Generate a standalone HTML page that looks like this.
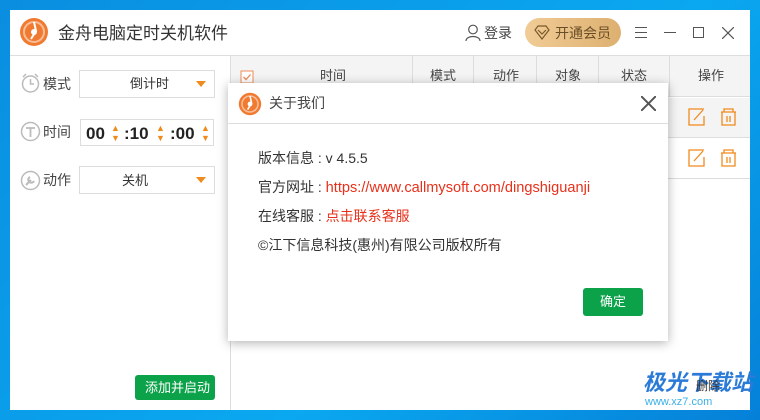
<!DOCTYPE html><html><head><meta charset="utf-8"><style>
*{margin:0;padding:0;box-sizing:border-box}
body{width:760px;height:420px;overflow:hidden;background:linear-gradient(135deg,#0a8ee0,#0aa8f0 60%,#0580d8);font-family:"Liberation Sans","Noto Sans CJK SC",sans-serif;position:relative;color:#333}
.a{position:absolute}
.win{left:10px;top:10px;width:740px;height:400px;background:#fff}
.t{font-size:13px;white-space:nowrap;line-height:1}
.sel{border:1px solid #ddd;background:#fff}
.tri{width:0;height:0;border-left:5px solid transparent;border-right:5px solid transparent;border-top:6px solid #f08a1c}
.hd{color:#444;font-size:13px;line-height:1;white-space:nowrap}
</style></head><body>
<div class="a win"></div>
<svg class="a" style="left:19px;top:17px" width="30" height="30" viewBox="0 0 30 30"><circle cx="15" cy="15" r="14" fill="#f07a30"/><circle cx="15" cy="15" r="10" fill="none" stroke="#fff" stroke-width="2" opacity=".5"/><path d="M15 5 L17 14 L12 22" stroke="#fff" stroke-width="2" fill="none"/><circle cx="15" cy="15" r="3" fill="#fff"/></svg>
<div class="a t" style="left:58px;top:25px;font-size:17px;color:#333">金舟电脑定时关机软件</div>
<div class="a" style="left:10px;top:55px;width:740px;height:1px;background:#ddd"></div>
<svg class="a" style="left:465px;top:24px" width="16" height="17" viewBox="0 0 16 17"><circle cx="8" cy="5.5" r="4.3" fill="none" stroke="#555" stroke-width="1.2"/><path d="M1 17 C1 11 15 11 15 17" fill="none" stroke="#555" stroke-width="1.2"/></svg>
<div class="a t" style="left:484px;top:26px;font-size:14px;color:#444">登录</div>
<div class="a" style="left:525px;top:18px;width:96px;height:29px;border-radius:15px;background:linear-gradient(90deg,#f1cc96,#ddb070)"></div>
<svg class="a" style="left:534px;top:25px" width="16" height="15" viewBox="0 0 16 15"><path d="M1 5 L4 1 H12 L15 5 L8 14 Z M4 5 L8 9 L12 5" fill="none" stroke="#7a5a2a" stroke-width="1.2"/></svg>
<div class="a t" style="left:555px;top:26px;font-size:14px;color:#6a4e25">开通会员</div>
<div class="a" style="left:635px;top:27px;width:12px;height:1px;background:#555;box-shadow:0 5px 0 #555,0 10px 0 #555"></div>
<div class="a" style="left:664px;top:32px;width:12px;height:1px;background:#555"></div>
<div class="a" style="left:693px;top:27px;width:11px;height:11px;border:1.3px solid #555"></div>
<svg class="a" style="left:722px;top:27px" width="12" height="12"><path d="M0 0L12 12M12 0L0 12" stroke="#555" stroke-width="1.2"/></svg>
<div class="a" style="left:230px;top:56px;width:1px;height:354px;background:#ddd"></div>
<svg class="a" style="left:20px;top:73px" width="21" height="21"><circle cx="10.5" cy="11" r="8" fill="none" stroke="#bbb" stroke-width="1.5"/><path d="M10.5 6V11H14M3 4L6 1M18 4L15 1" stroke="#bbb" stroke-width="1.5" fill="none"/></svg>
<div class="a t" style="left:43px;top:77px;font-size:14px;color:#444">模式</div>
<div class="a sel" style="left:79px;top:70px;width:136px;height:28px"></div>
<div class="a t" style="left:130px;top:77px">倒计时</div>
<div class="a tri" style="left:196px;top:81px"></div>
<svg class="a" style="left:20px;top:121px" width="21" height="21"><circle cx="10.5" cy="10.5" r="9" fill="none" stroke="#bbb" stroke-width="1.5"/><path d="M6 7H15M10.5 7V16" stroke="#bbb" stroke-width="1.8"/></svg>
<div class="a t" style="left:43px;top:125px;font-size:14px;color:#444">时间</div>
<div class="a sel" style="left:80px;top:119px;width:134px;height:27px"></div>
<div class="a t" style="left:86px;top:125px;font-size:17px;font-weight:bold;color:#222">00</div>
<div class="a t" style="left:124px;top:125px;font-size:17px;font-weight:bold;color:#222">:10</div>
<div class="a t" style="left:170px;top:125px;font-size:17px;font-weight:bold;color:#222">:00</div>
<div class="a t" style="left:111px;top:123px;font-size:9px;color:#f08a1c;line-height:10px">▲<br>▼</div>
<div class="a t" style="left:156px;top:123px;font-size:9px;color:#f08a1c;line-height:10px">▲<br>▼</div>
<div class="a t" style="left:201px;top:123px;font-size:9px;color:#f08a1c;line-height:10px">▲<br>▼</div>
<svg class="a" style="left:20px;top:170px" width="21" height="21"><circle cx="10.5" cy="10.5" r="9" fill="none" stroke="#bbb" stroke-width="1.5"/><path d="M6 15L11 10M10 7A3 3 0 1 0 14 11" stroke="#bbb" stroke-width="2" fill="none"/></svg>
<div class="a t" style="left:43px;top:173px;font-size:14px;color:#444">动作</div>
<div class="a sel" style="left:79px;top:166px;width:136px;height:28px"></div>
<div class="a t" style="left:122px;top:174px">关机</div>
<div class="a tri" style="left:196px;top:177px"></div>
<div class="a" style="left:135px;top:375px;width:80px;height:25px;background:#0ca24a;border-radius:3px"></div>
<div class="a t" style="left:145px;top:381px;color:#fff;font-size:13px">添加并启动</div>
<div class="a" style="left:231px;top:56px;width:519px;height:41px;background:#f4f4f4;border-bottom:1px solid #ddd"></div>
<div class="a" style="left:231px;top:98px;width:519px;height:40px;background:#f4f4f4;border-bottom:1px solid #ddd"></div>
<div class="a" style="left:231px;top:178px;width:519px;height:1px;background:#ddd"></div>
<div class="a" style="left:412px;top:56px;width:1px;height:41px;background:#ddd"></div>
<div class="a" style="left:473px;top:56px;width:1px;height:41px;background:#ddd"></div>
<div class="a" style="left:536px;top:56px;width:1px;height:41px;background:#ddd"></div>
<div class="a" style="left:598px;top:56px;width:1px;height:41px;background:#ddd"></div>
<div class="a" style="left:669px;top:56px;width:1px;height:41px;background:#ddd"></div>
<svg class="a" style="left:240px;top:70px" width="14" height="14"><rect x="1" y="1" width="12" height="12" fill="#fff" stroke="#f08a5a"/><path d="M3.5 7L6 9.5L10.5 4.5" stroke="#f08a5a" stroke-width="1.3" fill="none"/></svg>
<div class="a hd" style="left:320px;top:69px">时间</div>
<div class="a hd" style="left:430px;top:69px">模式</div>
<div class="a hd" style="left:493px;top:69px">动作</div>
<div class="a hd" style="left:555px;top:69px">对象</div>
<div class="a hd" style="left:621px;top:69px">状态</div>
<div class="a hd" style="left:698px;top:69px">操作</div>
<svg class="a" style="left:688px;top:108px" width="50" height="18"><path d="M16 1H1V17H16V8M6 12L15 2" fill="none" stroke="#f08a1c" stroke-width="1.3"/><path d="M33 4H48M36 4V1H45V4M34 4V17H47V4M39 8V14M42 8V14" fill="none" stroke="#f08a1c" stroke-width="1.3"/></svg>
<svg class="a" style="left:688px;top:149px" width="50" height="18"><path d="M16 1H1V17H16V8M6 12L15 2" fill="none" stroke="#f08a1c" stroke-width="1.3"/><path d="M33 4H48M36 4V1H45V4M34 4V17H47V4M39 8V14M42 8V14" fill="none" stroke="#f08a1c" stroke-width="1.3"/></svg>
<div class="a" style="left:228px;top:83px;width:440px;height:258px;background:#fff;box-shadow:0 2px 10px rgba(0,0,0,.3)"></div>
<svg class="a" style="left:238px;top:92px" width="24" height="24" viewBox="0 0 30 30"><circle cx="15" cy="15" r="14" fill="#f07a30"/><circle cx="15" cy="15" r="10" fill="none" stroke="#fff" stroke-width="2" opacity=".5"/><path d="M15 5 L17 14 L12 22" stroke="#fff" stroke-width="2" fill="none"/><circle cx="15" cy="15" r="3" fill="#fff"/></svg>
<div class="a t" style="left:269px;top:96px;font-size:14px;color:#444">关于我们</div>
<svg class="a" style="left:641px;top:96px" width="15" height="15"><path d="M0 0L15 15M15 0L0 15" stroke="#555" stroke-width="2"/></svg>
<div class="a" style="left:228px;top:123px;width:440px;height:1px;background:#ddd"></div>
<div class="a t" style="left:258px;top:151px;font-size:14px">版本信息 : v 4.5.5</div>
<div class="a t" style="left:258px;top:180px;font-size:14px">官方网址 : <span style="color:#e8311a;font-size:14.6px">https://www.callmysoft.com/dingshiguanji</span></div>
<div class="a t" style="left:258px;top:209px;font-size:14px">在线客服 : <span style="color:#e8311a">点击联系客服</span></div>
<div class="a t" style="left:258px;top:238px;font-size:14px">©江下信息科技(惠州)有限公司版权所有</div>
<div class="a" style="left:583px;top:288px;width:60px;height:28px;background:#0ca24a;border-radius:3px"></div>
<div class="a t" style="left:600px;top:295px;color:#fff">确定</div>
<div class="a t" style="left:643px;top:372px;font-size:22px;font-weight:bold;color:#2a7ad8;font-style:italic">极光下载站</div>
<div class="a t" style="left:645px;top:397px;font-size:11px;color:#3ab0e8">www.xz7.com</div>
<div class="a t" style="left:696px;top:380px;font-size:12px;color:#333">删除</div>
</body></html>
